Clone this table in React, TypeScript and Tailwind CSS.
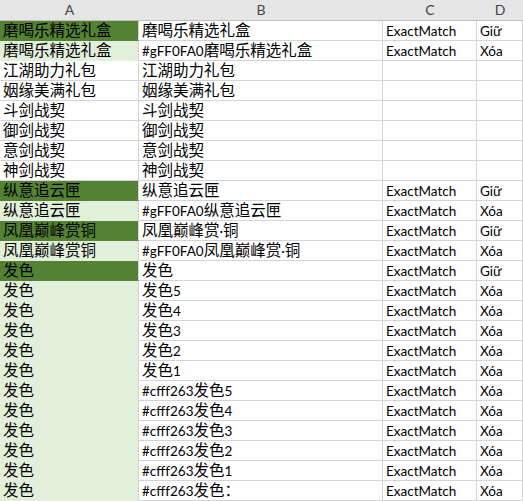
type Fill = 'dark' | 'light' | 'none';

type Row = {
  a: string;
  b: string;
  c?: string;
  d?: string;
  fill: Fill;
};

const rows: Row[] = [
  { a: '磨喝乐精选礼盒', b: '磨喝乐精选礼盒', c: 'ExactMatch', d: 'Giữ', fill: 'dark' },
  { a: '磨喝乐精选礼盒', b: '#gFF0FA0磨喝乐精选礼盒', c: 'ExactMatch', d: 'Xóa', fill: 'light' },
  { a: '江湖助力礼包', b: '江湖助力礼包', fill: 'none' },
  { a: '姻缘美满礼包', b: '姻缘美满礼包', fill: 'none' },
  { a: '斗剑战契', b: '斗剑战契', fill: 'none' },
  { a: '御剑战契', b: '御剑战契', fill: 'none' },
  { a: '意剑战契', b: '意剑战契', fill: 'none' },
  { a: '神剑战契', b: '神剑战契', fill: 'none' },
  { a: '纵意追云匣', b: '纵意追云匣', c: 'ExactMatch', d: 'Giữ', fill: 'dark' },
  { a: '纵意追云匣', b: '#gFF0FA0纵意追云匣', c: 'ExactMatch', d: 'Xóa', fill: 'light' },
  { a: '凤凰巅峰赏铜', b: '凤凰巅峰赏·铜', c: 'ExactMatch', d: 'Giữ', fill: 'dark' },
  { a: '凤凰巅峰赏铜', b: '#gFF0FA0凤凰巅峰赏·铜', c: 'ExactMatch', d: 'Xóa', fill: 'light' },
  { a: '发色', b: '发色', c: 'ExactMatch', d: 'Giữ', fill: 'dark' },
  { a: '发色', b: '发色5', c: 'ExactMatch', d: 'Xóa', fill: 'light' },
  { a: '发色', b: '发色4', c: 'ExactMatch', d: 'Xóa', fill: 'light' },
  { a: '发色', b: '发色3', c: 'ExactMatch', d: 'Xóa', fill: 'light' },
  { a: '发色', b: '发色2', c: 'ExactMatch', d: 'Xóa', fill: 'light' },
  { a: '发色', b: '发色1', c: 'ExactMatch', d: 'Xóa', fill: 'light' },
  { a: '发色', b: '#cfff263发色5', c: 'ExactMatch', d: 'Xóa', fill: 'light' },
  { a: '发色', b: '#cfff263发色4', c: 'ExactMatch', d: 'Xóa', fill: 'light' },
  { a: '发色', b: '#cfff263发色3', c: 'ExactMatch', d: 'Xóa', fill: 'light' },
  { a: '发色', b: '#cfff263发色2', c: 'ExactMatch', d: 'Xóa', fill: 'light' },
  { a: '发色', b: '#cfff263发色1', c: 'ExactMatch', d: 'Xóa', fill: 'light' },
  { a: '发色', b: '#cfff263发色：', c: 'ExactMatch', d: 'Xóa', fill: 'light' },
];

const fillClass: Record<Fill, string> = {
  dark: 'bg-[#548235] border-[#548235]',
  light: 'bg-[#e2efda] border-[#e2efda]',
  none: 'bg-white border-[#d4d4d4]',
};

const cell = 'h-5 truncate whitespace-nowrap border-r border-b pl-[3px] leading-[19px]';

// latin runs are set narrower than the CJK glyphs, like Calibri next to YaHei
function Text({ value }: { value?: string }) {
  if (!value) return null;
  const parts = value.split(/([\u0000-\u024F\u1E00-\u1EFF]+)/).filter(Boolean);
  return (
    <>
      {parts.map((p, i) =>
        /^[\u0000-\u024F\u1E00-\u1EFF]+$/.test(p) ? (
          <span key={i} className="text-[13.5px]">
            {p}
          </span>
        ) : (
          <span key={i}>{p}</span>
        ),
      )}
    </>
  );
}

export default function App() {
  return (
    <div className="h-[501px] w-[523px] overflow-hidden bg-white font-['Lato','Noto_Sans_CJK_SC',sans-serif] text-[15.5px] text-black">
      <div className="grid grid-cols-[139px_244px_94px_46px]">
        {['A', 'B', 'C', 'D'].map((h) => (
          <div
            key={h}
            className="h-[21px] border-b border-[#bfbfbf] bg-[#e6e6e6] text-center text-[14px] leading-5 text-[#444]"
          >
            {h}
          </div>
        ))}

        {rows.map((r, i) => (
          <div key={i} className="contents">
            <div className={`${cell} ${fillClass[r.fill]} border-r-[#d4d4d4]`}>
              <Text value={r.a} />
            </div>
            <div className={`${cell} border-[#d4d4d4]`}>
              <Text value={r.b} />
            </div>
            <div className={`${cell} border-[#d4d4d4]`}>
              <Text value={r.c} />
            </div>
            <div className={`${cell} border-[#d4d4d4]`}>
              <Text value={r.d} />
            </div>
          </div>
        ))}
      </div>
    </div>
  );
}
